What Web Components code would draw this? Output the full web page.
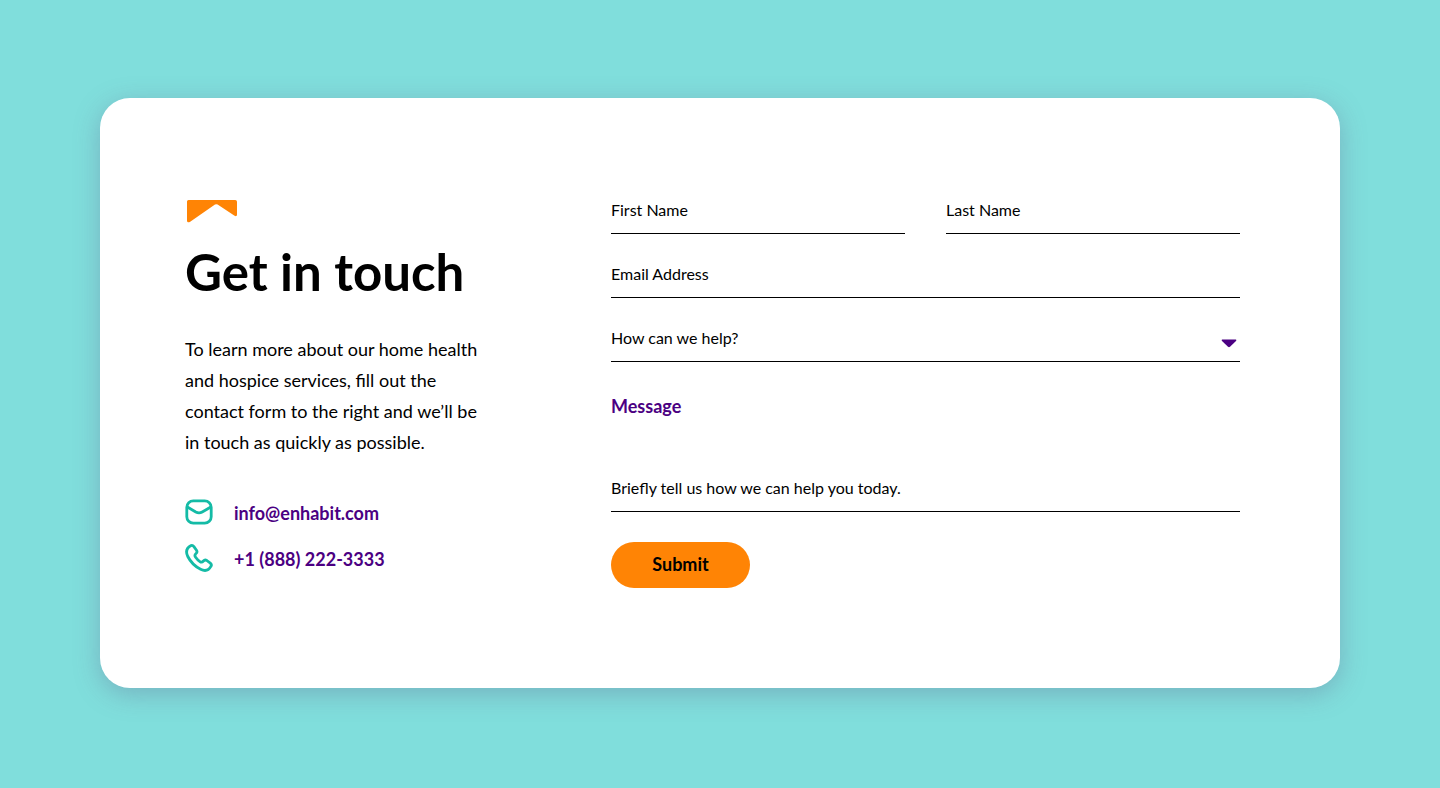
<!DOCTYPE html>
<html lang="en">
<head>
<meta charset="utf-8">
<meta name="viewport" content="width=device-width, initial-scale=1">
<title>Get in touch</title>
<style>
  :root {
    --orange: #ff8405;
    --purple: #4b0082;
    --teal: #14bba6;
    --ink: #000;
  }
  body {
    margin: 0;
    min-height: 100vh;
    background: #80dedc;
    color: var(--ink);
    font-family: Lato, "Open Sans", sans-serif;
  }
</style>
</head>
<body>
<contact-card>
  <contact-intro slot="intro">
    <span slot="title">Get in touch</span>
    <span slot="text">To learn more about our home health and hospice services, fill out the contact form to the right and we’ll be in touch as quickly as possible.</span>
    <contact-link slot="links" icon="mail" href="mailto:info@enhabit.com">info@enhabit.com</contact-link>
    <contact-link slot="links" icon="phone" href="tel:+18882223333">+1 (888) 222-3333</contact-link>
  </contact-intro>
  <contact-form slot="form"></contact-form>
</contact-card>

<script>
  class BaseElement extends HTMLElement {
    constructor() {
      super();
      this.attachShadow({ mode: "open" });
    }
    connectedCallback() {
      if (!this.shadowRoot.firstChild) this.shadowRoot.innerHTML = this.render();
    }
  }

  customElements.define("contact-card", class extends BaseElement {
    render() {
      return `
      <style>
        :host { display: block; padding: 98px 100px 100px; }
        main {
          display: flex;
          gap: 122px;
          padding: 90px 100px 100px 85px;
          border-radius: 30px;
          background: #fff;
          box-shadow: 0 6px 26px rgba(100, 100, 140, 0.36);
        }
        slot[name="intro"] { display: block; flex: 0 0 304px; }
        slot[name="form"] { display: block; flex: 1; min-width: 0; }
        @media (max-width: 1000px) {
          :host { padding: 24px; }
          main { flex-direction: column; gap: 40px; padding: 40px; }
          slot[name="intro"] { flex: none; }
        }
      </style>
      <main><slot name="intro"></slot><slot name="form"></slot></main>`;
    }
  });

  customElements.define("contact-intro", class extends BaseElement {
    render() {
      return `
      <style>
        :host { display: block; padding-top: 12px; }
        .mark { display: block; margin-left: 2px; }
        h1 { margin: 19px 0 32px; font-size: 51px; line-height: 60px; font-weight: 700; white-space: nowrap; }
        p { margin: 0 0 31px; font-size: 18px; line-height: 31px; }
        address { display: grid; font-style: normal; }
      </style>
      <svg class="mark" width="50" height="23" viewBox="0 0 50 23" aria-hidden="true">
        <path fill="var(--orange)" d="M1.5 0H48.2Q50 0 50 1.8V14.5Q50 17 47.6 15.8L30.6 4.6Q29.3 3.8 28 4.6L3.2 21.7Q0 23.3 0 20.4V1.5Q0 0 1.5 0Z"/>
      </svg>
      <h1><slot name="title"></slot></h1>
      <p><slot name="text"></slot></p>
      <address><slot name="links"></slot></address>`;
    }
  });

  const ICONS = {
    mail: `<rect x="1.8" y="2.8" width="24.4" height="22.4" rx="6.5"/><path d="M2.4 9L10.8 14Q14 15.8 17.2 14L25.8 9"/>`,
    phone: `<path d="M6.1 1.6C7.2 1.2 8.2 1.7 8.9 2.6L11.5 6.2C12.3 7.4 12 8.6 11 9.5C9.6 10.7 9.5 11.7 10.6 13.3C11.8 15 13.2 16.5 14.9 17.6C16.3 18.6 17.3 18.3 18.4 17C19.3 15.9 20.6 15.7 21.8 16.5L25.3 19.1C26.4 20 26.7 21.2 25.9 22.4C23.6 26.5 20 27.5 15.6 25.3C9.8 22.3 5.6 18.1 2.8 12.5C.6 8.1 1.5 4.1 6.1 1.6Z"/>`
  };

  customElements.define("contact-link", class extends BaseElement {
    render() {
      return `
      <style>
        :host { display: block; }
        a {
          display: flex;
          align-items: center;
          gap: 21px;
          height: 46px;
          color: var(--purple);
          font-size: 18px;
          line-height: 24px;
          font-weight: 700;
          text-decoration: none;
        }
        .label { padding-top: 2px; }
        svg { flex: none; fill: none; stroke: var(--teal); stroke-width: 2.8; stroke-linejoin: round; }
      </style>
      <a href="${this.getAttribute("href")}">
        <svg width="28" height="28" viewBox="0 0 28 28" aria-hidden="true">${ICONS[this.getAttribute("icon")]}</svg>
        <span class="label"><slot></slot></span>
      </a>`;
    }
  });

  customElements.define("contact-form", class extends BaseElement {
    render() {
      return `
      <style>
        :host { display: block; }
        form { display: grid; gap: 18px; }
        .names { display: grid; grid-template-columns: 1fr 1fr; gap: 41px; }
        input, select, textarea {
          box-sizing: border-box;
          display: block;
          width: 100%;
          height: 46px;
          margin: 0;
          padding: 0 0 2px;
          border: 0;
          border-bottom: 1px solid var(--ink);
          border-radius: 0;
          background: transparent;
          color: var(--ink);
          font: 400 16px/24px Lato, "Open Sans", sans-serif;
          appearance: none;
          outline-offset: 4px;
        }
        textarea { padding: 10px 0 11px; resize: none; overflow: hidden; }
        ::placeholder { color: var(--ink); opacity: 1; }
        .pick { display: grid; align-items: center; }
        .pick > * { grid-area: 1 / 1; }
        .pick svg { justify-self: end; margin: 8px 3px 0 0; pointer-events: none; }
        .message { display: grid; gap: 48px; padding-top: 14px; }
        .message label { color: var(--purple); font-size: 18px; line-height: 24px; font-weight: 700; }
        button {
          justify-self: start;
          min-width: 139px;
          height: 46px;
          margin-top: 12px;
          padding: 0 40px 2px;
          border: 0;
          border-radius: 23px;
          background: var(--orange);
          color: var(--ink);
          font: 700 18px/24px Lato, "Open Sans", sans-serif;
          cursor: pointer;
        }
      </style>
      <form>
        <div class="names">
          <input type="text" name="first" aria-label="First Name" placeholder="First Name" autocomplete="given-name">
          <input type="text" name="last" aria-label="Last Name" placeholder="Last Name" autocomplete="family-name">
        </div>
        <input type="email" name="email" aria-label="Email Address" placeholder="Email Address" autocomplete="email">
        <div class="pick">
          <select name="topic" aria-label="How can we help?">
            <option>How can we help?</option>
            <option>Home health</option>
            <option>Hospice</option>
          </select>
          <svg width="16" height="9" viewBox="0 0 16 9" aria-hidden="true"><path fill="var(--purple)" d="M1.2 .5H14.8Q16 .9 15 2L9 7.8Q8 8.7 7 7.8L1 2Q0 .9 1.2 .5Z"/></svg>
        </div>
        <div class="message">
          <label for="message">Message</label>
          <textarea id="message" name="message" rows="1" placeholder="Briefly tell us how we can help you today."></textarea>
        </div>
        <button type="submit">Submit</button>
      </form>`;
    }
  });
</script>
</body>
</html>
